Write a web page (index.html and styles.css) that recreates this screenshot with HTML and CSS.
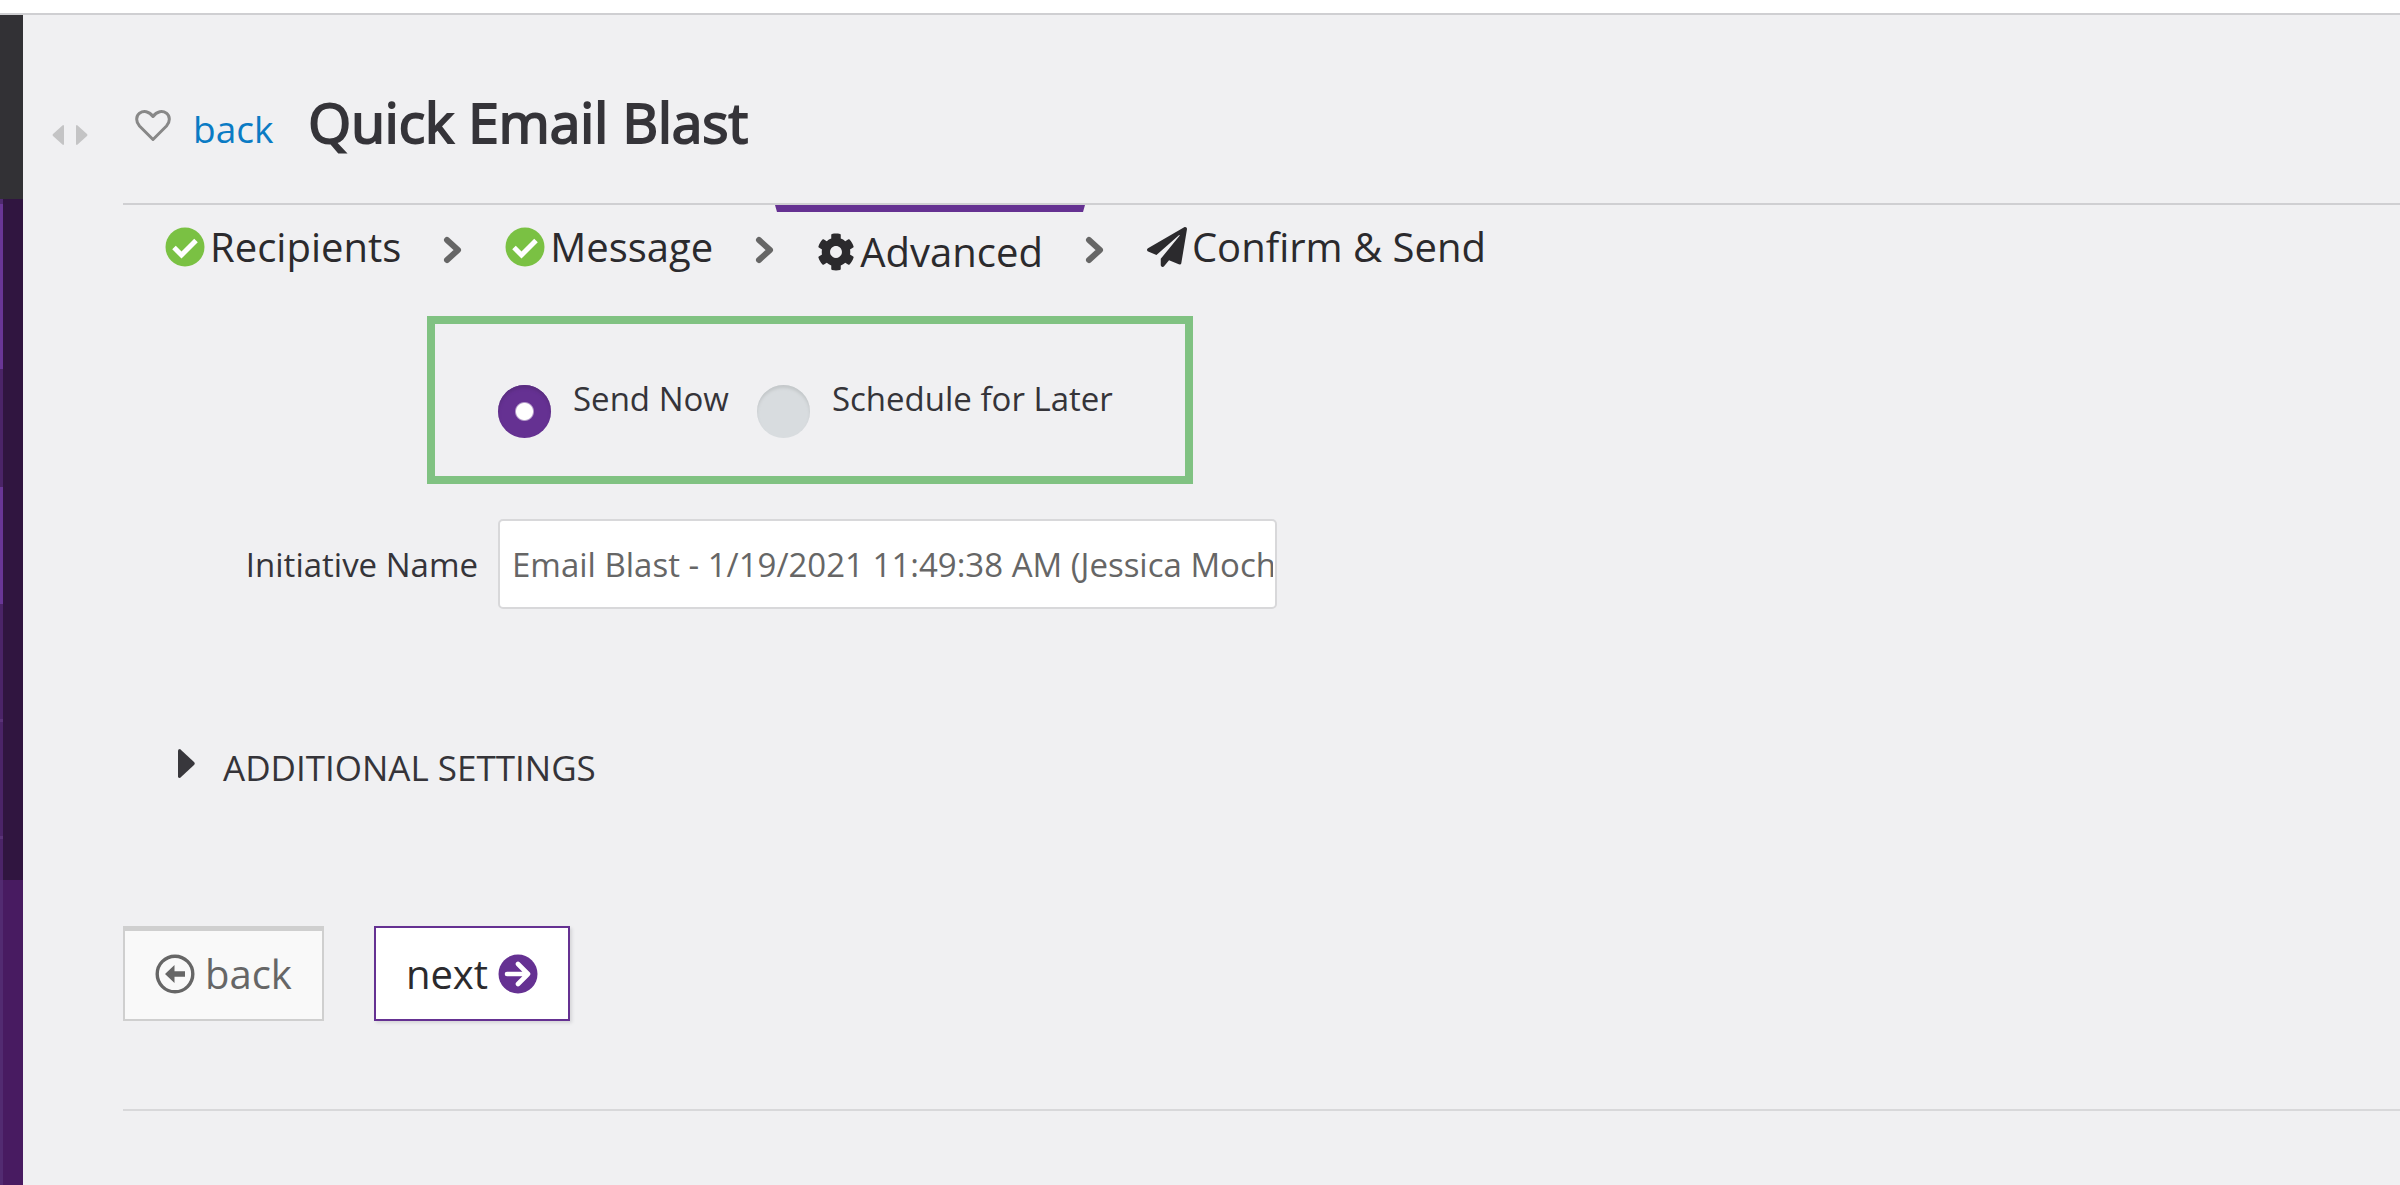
FILE: index.html
```
<!DOCTYPE html>
<html lang="en">
<head>
    <meta charset="UTF-8">
    <meta name="viewport" content="width=device-width, initial-scale=1.0">
    <title>Quick Email Blast</title>
    <link rel="stylesheet" href="styles.css">
</head>
<body>
    <div class="topbar"></div>

    <div class="layout">
        <!-- Collapsed sidebar -->
        <div class="sidebar">
            <div class="sidebar-top"></div>
            <div class="sidebar-menu"></div>
            <div class="sidebar-rest"></div>
        </div>

        <div class="gutter">
            <button type="button" class="toggle" aria-label="Collapse menu">
                <svg width="12" height="20" viewBox="0 0 12 20"><path d="M11 0q1 0 1 1v18q0 1-1 1L1 11q-1-1 0-2z"/></svg>
            </button>
            <button type="button" class="toggle" aria-label="Expand menu">
                <svg width="12" height="20" viewBox="0 0 12 20"><path d="M1 0q-1 0-1 1v18q0 1 1 1l10-9q1-1 0-2z"/></svg>
            </button>
        </div>

        <main class="main">
            <header class="header">
                <button type="button" class="favorite" aria-label="Favorite">
                    <svg width="36" height="32" viewBox="0 0 36 32"><path d="M18 29.500L4.500 16C.5 11.500 1 6 4.500 3.200 8.500.4 14 1 18 6.500 22 1 27.500.4 31.500 3.200 35 6 35.500 11.500 31.500 16z"/></svg>
                </button>
                <a href="#" class="back-link">back</a>
                <h1 class="title">Quick Email Blast</h1>
            </header>

            <!-- Wizard steps -->
            <ol class="steps">
                <li>
                    <a href="#" class="step">
                        <svg class="icon-check" width="40" height="40" viewBox="0 0 40 40"><circle cx="20" cy="20" r="19.500"/><path d="M9 20.500l7.500 7.500L31 13.500"/></svg>
                        Recipients
                    </a>
                    <svg class="chevron" width="20" height="28" viewBox="0 0 20 28"><path d="M4 4l11 10L4 24"/></svg>
                </li>
                <li>
                    <a href="#" class="step">
                        <svg class="icon-check" width="40" height="40" viewBox="0 0 40 40"><circle cx="20" cy="20" r="19.500"/><path d="M9 20.500l7.500 7.500L31 13.500"/></svg>
                        Message
                    </a>
                    <svg class="chevron" width="20" height="28" viewBox="0 0 20 28"><path d="M4 4l11 10L4 24"/></svg>
                </li>
                <li>
                    <a href="#" class="step active" aria-current="step">
                        <svg class="icon-dark" width="38" height="38" viewBox="0 0 512 512"><path fill-rule="evenodd" d="M487.400 315.700l-42.600-24.600c4.300-23.200 4.300-47 0-70.200l42.600-24.600c4.900-2.800 7.100-8.600 5.500-14-11.100-35.600-30-67.800-54.700-94.600-3.800-4.100-10-5.100-14.800-2.300L380.800 110c-17.900-15.400-38.500-27.300-60.800-35.100V25.800c0-5.600-3.900-10.500-9.400-11.700-36.700-8.200-74.300-7.800-109.200 0-5.500 1.200-9.400 6.100-9.400 11.700V75c-22.200 7.900-42.800 19.800-60.800 35.100L88.700 85.500c-4.900-2.800-11-1.900-14.800 2.300-24.700 26.700-43.600 58.900-54.700 94.600-1.700 5.400.6 11.200 5.500 14L67.300 221c-4.300 23.200-4.300 47 0 70.200l-42.600 24.600c-4.900 2.800-7.100 8.600-5.500 14 11.100 35.600 30 67.800 54.700 94.600 3.800 4.100 10 5.100 14.800 2.300l42.600-24.600c17.900 15.400 38.500 27.300 60.800 35.100v49.200c0 5.600 3.900 10.500 9.400 11.700 36.700 8.200 74.300 7.800 109.200 0 5.500-1.200 9.400-6.100 9.400-11.700v-49.200c22.200-7.900 42.800-19.800 60.800-35.100l42.600 24.600c4.900 2.800 11 1.900 14.800-2.300 24.700-26.700 43.600-58.900 54.700-94.600 1.500-5.500-.7-11.300-5.600-14.100zM256 336c-44.100 0-80-35.900-80-80s35.900-80 80-80 80 35.900 80 80-35.900 80-80 80z"/></svg>
                        Advanced
                    </a>
                    <svg class="chevron" width="20" height="28" viewBox="0 0 20 28"><path d="M4 4l11 10L4 24"/></svg>
                </li>
                <li>
                    <a href="#" class="step">
                        <svg class="icon-dark" width="40" height="40" viewBox="0 0 512 512"><path d="M476 3.200L12.500 270.600c-18.100 10.400-15.800 35.600 2.200 43.200L121 358.400l287.300-253.200c5.500-4.900 13.300 2.600 8.600 8.300L176 407v80.500c0 23.600 28.500 32.900 42.500 15.800L282 426l124.600 52.200c14.200 6 30.400-2.900 33-18.200l72-432C515 7.800 493.300-6.800 476 3.200z"/></svg>
                        Confirm &amp; Send
                    </a>
                </li>
            </ol>

            <form>
                <div class="send-box">
                    <label class="radio"><input type="radio" name="send" checked> Send Now</label>
                    <label class="radio"><input type="radio" name="send"> Schedule for Later</label>
                </div>

                <div class="field">
                    <label for="initiative">Initiative Name</label>
                    <input type="text" id="initiative" value="Email Blast - 1/19/2021 11:49:38 AM (Jessica Moch">
                </div>

                <button type="button" class="additional" aria-expanded="false">
                    <svg width="17" height="29" viewBox="0 0 17 29"><path d="M0 1.500Q0 0 2 0l14 13q1.500 1.500 0 3L2 29Q0 29 0 27.500z"/></svg>
                    ADDITIONAL SETTINGS
                </button>

                <div class="actions">
                    <button type="button" class="btn btn-back">
                        <svg width="40" height="40" viewBox="0 0 40 40"><circle cx="20" cy="20" r="17.800" fill="none" stroke="#666" stroke-width="3.400"/><path fill="#666" d="M10 20l9.500-9v6.200H30v5.600H19.500V29z"/></svg>
                        back
                    </button>
                    <button type="submit" class="btn btn-next">
                        next
                        <svg width="40" height="40" viewBox="0 0 40 40"><circle cx="20" cy="20" r="19.500" fill="#653192"/><path fill="none" stroke="#fff" stroke-width="4.600" stroke-linecap="round" stroke-linejoin="round" d="M9 20h21M20 10l10 10-10 10"/></svg>
                    </button>
                </div>
            </form>

            <hr class="divider">
        </main>
    </div>
</body>
</html>
```
FILE: styles.css
```
* {
    box-sizing: border-box;
}

body {
    margin: 0;
    min-height: 100vh;
    display: flex;
    flex-direction: column;
    background: #f0f0f2;
    color: #353439;
    font-family: "Open Sans", sans-serif;
    font-size: 33px;
}

button {
    font-family: inherit;
    border: none;
    background: none;
    padding: 0;
    cursor: pointer;
}

svg {
    display: block;
    flex: none;
}

.topbar {
    height: 15px;
    background: #fff;
    border-bottom: 2px solid #cfcfd2;
}

.layout {
    flex: 1;
    display: flex;
}

/* Sidebar */
.sidebar {
    width: 23px;
    display: flex;
    flex-direction: column;
}

.sidebar-top {
    height: 184px;
    background: #323135;
}

.sidebar-menu {
    height: 681px;
    border-left: 3px solid;
    border-image: linear-gradient(#4f2a70 5px, #693696 5px, #693696 170px, #4b2468 170px, #4b2468 288px, #693696 288px, #693696 405px, #4b2468 405px, #4b2468 520px, #5a3278 520px, #5a3278 523px, #4b2468 523px, #4b2468 637px, #5a3278 637px, #5a3278 640px, #4b2468 640px) 0 0 0 3;
    background: #301540;
}

.sidebar-rest {
    flex: 1;
    border-left: 3px solid #522b71;
    background: #481b61;
}

.gutter {
    width: 100px;
    display: flex;
    align-items: flex-start;
    gap: 12px;
    padding: 110px 0 0 29px;
}

.toggle svg {
    fill: #c4c4c5;
}

.main {
    flex: 1;
    min-width: 0;
}

/* Header */
.header {
    display: flex;
    align-items: baseline;
    padding: 67px 0 41px 12px;
    border-bottom: 2px solid #cfcfd2;
}

.favorite {
    align-self: center;
    margin: 8px 22px 0 0;
}

.favorite svg {
    fill: none;
    stroke: #888;
    stroke-width: 3;
    stroke-linejoin: round;
}

.back-link {
    margin-right: 35px;
    color: #0a7bc4;
    font-size: 37px;
    text-decoration: none;
}

.title {
    margin: 0;
    font-size: 55px;
    line-height: 80px;
    font-weight: 400;
    -webkit-text-stroke: 2px #353439;
}

/* Steps */
.steps {
    display: flex;
    align-items: flex-start;
    margin: 0;
    padding: 0;
    list-style: none;
}

.steps li {
    display: flex;
    align-items: flex-start;
}

.step {
    display: flex;
    align-items: center;
    gap: 5px;
    padding: 10px 40px;
    border: 2px solid transparent;
    border-bottom: 0;
    color: #2b2a2d;
    font-size: 40px;
    line-height: 60px;
    text-decoration: none;
}

.step.active {
    border-top: 7px solid #653192;
}

.chevron {
    margin-top: 31px;
    fill: none;
    stroke: #666;
    stroke-width: 6;
    stroke-linecap: round;
    stroke-linejoin: round;
}

.icon-check circle {
    fill: #7ac143;
}

.icon-check path {
    fill: none;
    stroke: #fff;
    stroke-width: 5;
}

.icon-dark {
    fill: #2b2a2d;
}

/* Form */
.send-box {
    display: flex;
    gap: 28px;
    width: max-content;
    margin: 24px 0 0 304px;
    padding: 61px 72px 38px 63px;
    border: 8px solid #80c282;
}

.radio {
    display: flex;
    gap: 22px;
    line-height: 28px;
}

.radio input {
    appearance: none;
    flex: none;
    width: 53px;
    height: 53px;
    margin: 0;
    border-radius: 50%;
    background: #d8dcdf;
    box-shadow: inset 0 3px 3px #c4c8ca;
}

.radio input:checked {
    background: radial-gradient(circle, #fff 8px, #653192 10px);
    box-shadow: inset 0 3px 3px #5a2d80;
}

.field {
    display: flex;
    align-items: center;
    gap: 20px;
    margin-top: 35px;
}

.field label {
    width: 355px;
    text-align: right;
}

.field input {
    width: 779px;
    height: 90px;
    padding: 0 2px 0 12px;
    border: 2px solid #d8d8da;
    border-radius: 5px;
    background: #fff;
    color: #666;
    font: inherit;
}

.additional {
    display: flex;
    gap: 28px;
    margin: 135px 0 0 55px;
    color: #353439;
    font-size: 35px;
    line-height: 48px;
}

.additional svg {
    margin-top: 5px;
    fill: #38373c;
}

.actions {
    display: flex;
    gap: 50px;
    margin-top: 134px;
}

.btn {
    display: flex;
    align-items: center;
    gap: 10px;
    height: 95px;
    padding: 0 30px;
    border: 2px solid #cfcfcf;
    font-size: 40px;
}

.btn-back {
    border-top-width: 5px;
    padding-bottom: 3px;
    background: #f9f9f9;
    color: #666;
}

.btn-next {
    border-color: #653192;
    background: #fff;
    color: #2b2a2d;
    box-shadow: 2px 2px 3px #d5d5d8;
}

.divider {
    margin: 88px 0 0;
    border: 0;
    border-top: 2px solid #d8d8da;
}
```
